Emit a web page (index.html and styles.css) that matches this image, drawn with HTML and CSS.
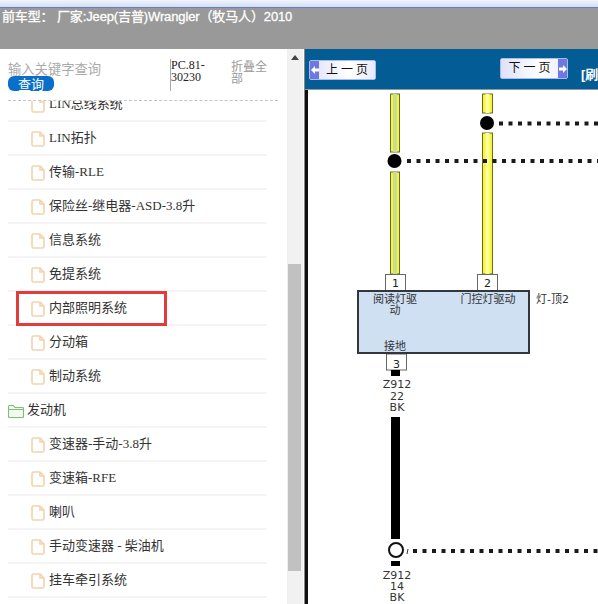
FILE: index.html
```html
<!doctype html>

<html lang="en">
<head>
    <meta charset="utf-8">
    <title>车型电路图</title>
    <link rel="stylesheet" href="styles.css">
</head>

<body>
<div class="topstrip"></div>
<div class="carbar">前车型： 厂家:Jeep(吉普)Wrangler（牧马人）2010</div>
<div class="main">
    <div class="side">
        <div class="search">
            <div class="search-left">
                <div class="search-input">输入关键字查询</div>
                <div class="search-btn">查询</div>
            </div>
            <div class="pc-code">PC.81-30230</div>
            <div class="collapse">折叠全部</div>
        </div>
        <div class="tree">
            <ul class="tree-list">
                <li class="file"><svg class="ico-file" viewBox="0 0 14 16"><path d="M1 2.5a1.5 1.5 0 0 1 1.5-1.5H9l4 4v8.500a1.500 1.500 0 0 1-1.500 1.500h-9A1.500 1.500 0 0 1 1 13.500zM9 1v4h4"/></svg>LIN总线系统</li>
                <li class="file"><svg class="ico-file" viewBox="0 0 14 16"><path d="M1 2.5a1.5 1.5 0 0 1 1.5-1.5H9l4 4v8.500a1.500 1.500 0 0 1-1.500 1.500h-9A1.500 1.500 0 0 1 1 13.500zM9 1v4h4"/></svg>LIN拓扑</li>
                <li class="file"><svg class="ico-file" viewBox="0 0 14 16"><path d="M1 2.5a1.5 1.5 0 0 1 1.5-1.5H9l4 4v8.500a1.500 1.500 0 0 1-1.500 1.500h-9A1.500 1.500 0 0 1 1 13.500zM9 1v4h4"/></svg>传输-RLE</li>
                <li class="file"><svg class="ico-file" viewBox="0 0 14 16"><path d="M1 2.5a1.5 1.5 0 0 1 1.5-1.5H9l4 4v8.500a1.500 1.500 0 0 1-1.500 1.500h-9A1.500 1.500 0 0 1 1 13.500zM9 1v4h4"/></svg>保险丝-继电器-ASD-3.8升</li>
                <li class="file"><svg class="ico-file" viewBox="0 0 14 16"><path d="M1 2.5a1.5 1.5 0 0 1 1.5-1.5H9l4 4v8.500a1.500 1.500 0 0 1-1.500 1.500h-9A1.500 1.500 0 0 1 1 13.500zM9 1v4h4"/></svg>信息系统</li>
                <li class="file"><svg class="ico-file" viewBox="0 0 14 16"><path d="M1 2.5a1.5 1.5 0 0 1 1.5-1.5H9l4 4v8.500a1.500 1.500 0 0 1-1.500 1.500h-9A1.500 1.500 0 0 1 1 13.500zM9 1v4h4"/></svg>免提系统</li>
                <li class="file"><svg class="ico-file" viewBox="0 0 14 16"><path d="M1 2.5a1.5 1.5 0 0 1 1.5-1.5H9l4 4v8.500a1.500 1.500 0 0 1-1.500 1.500h-9A1.500 1.500 0 0 1 1 13.500zM9 1v4h4"/></svg>内部照明系统</li>
                <li class="file"><svg class="ico-file" viewBox="0 0 14 16"><path d="M1 2.5a1.5 1.5 0 0 1 1.5-1.5H9l4 4v8.500a1.500 1.500 0 0 1-1.500 1.500h-9A1.500 1.500 0 0 1 1 13.500zM9 1v4h4"/></svg>分动箱</li>
                <li class="file"><svg class="ico-file" viewBox="0 0 14 16"><path d="M1 2.5a1.5 1.5 0 0 1 1.5-1.5H9l4 4v8.500a1.500 1.500 0 0 1-1.500 1.500h-9A1.500 1.500 0 0 1 1 13.500zM9 1v4h4"/></svg>制动系统</li>
                <li class="folder"><svg class="ico-folder" viewBox="0 0 16 13"><path d="M.5 2V1.500a1 1 0 0 1 1-1h4l1.500 2h7.500a1 1 0 0 1 1 1v8a1 1 0 0 1-1 1h-13a1 1 0 0 1-1-1zM.5 4.500h15"/></svg>发动机</li>
                <li class="file"><svg class="ico-file" viewBox="0 0 14 16"><path d="M1 2.5a1.5 1.5 0 0 1 1.5-1.5H9l4 4v8.500a1.500 1.500 0 0 1-1.500 1.500h-9A1.500 1.500 0 0 1 1 13.500zM9 1v4h4"/></svg>变速器-手动-3.8升</li>
                <li class="file"><svg class="ico-file" viewBox="0 0 14 16"><path d="M1 2.5a1.5 1.5 0 0 1 1.5-1.5H9l4 4v8.500a1.500 1.500 0 0 1-1.500 1.500h-9A1.500 1.500 0 0 1 1 13.500zM9 1v4h4"/></svg>变速箱-RFE</li>
                <li class="file"><svg class="ico-file" viewBox="0 0 14 16"><path d="M1 2.5a1.5 1.5 0 0 1 1.5-1.5H9l4 4v8.500a1.500 1.500 0 0 1-1.500 1.500h-9A1.500 1.500 0 0 1 1 13.500zM9 1v4h4"/></svg>喇叭</li>
                <li class="file"><svg class="ico-file" viewBox="0 0 14 16"><path d="M1 2.5a1.5 1.5 0 0 1 1.5-1.5H9l4 4v8.500a1.500 1.500 0 0 1-1.500 1.500h-9A1.500 1.500 0 0 1 1 13.500zM9 1v4h4"/></svg>手动变速器 - 柴油机</li>
                <li class="file"><svg class="ico-file" viewBox="0 0 14 16"><path d="M1 2.5a1.5 1.5 0 0 1 1.5-1.5H9l4 4v8.500a1.500 1.500 0 0 1-1.500 1.500h-9A1.500 1.500 0 0 1 1 13.500zM9 1v4h4"/></svg>挂车牵引系统</li>
            </ul>
        </div>
        <div class="redbox"></div>
    </div>
    <div class="scrollbar">
        <div class="scroll-up"></div>
        <div class="scroll-thumb"></div>
    </div>
    <div class="viewer">
        <div class="toolbar">
            <div class="pagebtn prev"><span class="cap"><svg viewBox="0 0 10 10"><path d="M0 5l5-5v3h5v4H5v3z"/></svg></span><span class="label">上 一 页</span></div>
            <div class="pagebtn next"><span class="label">下 一 页</span><span class="cap"><svg viewBox="0 0 10 10"><path d="M10 5L5 0v3H0v4h5v3z"/></svg></span></div>
            <div class="refresh">[刷新]</div>
        </div>
        <div class="canvas">
            <svg class="diagram" viewBox="308 90 290 514">
                <g class="wire-yellow">
                    <rect x="390.500" y="94" width="9" height="58"/>
                    <rect x="390.500" y="172" width="9" height="102"/>
                    <rect x="482.500" y="94" width="10" height="19"/>
                    <rect x="482.500" y="133" width="10" height="141"/>
                </g>
                <g class="wire-core">
                    <rect x="393" y="94" width="4" height="58"/>
                    <rect x="393" y="172" width="4" height="102"/>
                </g>
                <g class="wire-pale">
                    <rect x="485.500" y="94" width="4" height="19"/>
                    <rect x="485.500" y="133" width="4" height="141"/>
                </g>
                <circle class="dot" cx="487" cy="123" r="7"/>
                <circle class="dot" cx="394.500" cy="161" r="7"/>
                <path class="dotted" d="M499 123.500H598M407 161H598M413 551H598"/>
                <path class="dotted-tick" d="M408 549l-1 5"/>

                <rect class="pin" x="385.500" y="274.500" width="20" height="16"/>
                <rect class="pin" x="477.500" y="274.500" width="20" height="16"/>
                <rect class="pin" x="386.500" y="354" width="20" height="16"/>
                <text class="pin-no" x="395.500" y="287">1</text>
                <text class="pin-no" x="487.500" y="287">2</text>
                <text class="pin-no" x="396.500" y="368">3</text>

                <rect class="module" x="358" y="291" width="171" height="62"/>
                <text class="lab" x="395" y="303">阅读灯驱</text>
                <text class="lab" x="395" y="314">动</text>
                <text class="lab" x="488" y="303">门控灯驱动</text>
                <text class="lab" x="395" y="350">接地</text>
                <text class="lab lab-left" x="536" y="303">灯-顶2</text>

                <rect class="wire-black" x="391" y="370" width="9" height="6"/>
                <text class="lab" x="397" y="388">Z912</text>
                <text class="lab" x="397" y="400">22</text>
                <text class="lab" x="397" y="411">BK</text>
                <rect class="wire-black" x="391" y="417" width="9" height="122"/>
                <circle class="open" cx="396" cy="550" r="7"/>
                <rect class="wire-black" x="391" y="561" width="9" height="5"/>
                <text class="lab" x="397" y="579">Z912</text>
                <text class="lab" x="397" y="590">14</text>
                <text class="lab" x="397" y="601">BK</text>
            </svg>
        </div>
    </div>
</div>
</body>
</html>
```

FILE: styles.css
```css
html, body {
	margin: 0;
	height: 604px;
	overflow: hidden;
	background: #fff;
	font-family: "Liberation Serif", "Noto Sans CJK SC", serif;
}
.topstrip {
	height: 7px;
	background: linear-gradient(to bottom, #f2f5fc, #d3dcf2);
	border-bottom: 1px solid #5f80c8;
}
.carbar {
	height: 41px;
	box-sizing: border-box;
	padding: 1px 0 0 2px;
	background: #999;
	color: #fff;
	font-family: "Liberation Sans", "Noto Sans CJK SC", sans-serif;
	font-size: 13px;
	letter-spacing: -0.13px;
	-webkit-text-stroke: 0.3px #fff;
	line-height: 16px;
	white-space: nowrap;
	overflow: hidden;
}
.main {
	display: flex;
	height: 555px;
}

/* left panel */
.side {
	position: relative;
	width: 287px;
	flex: none;
	display: flex;
	flex-direction: column;
	overflow: hidden;
}
.search {
	display: flex;
	height: 52px;
	box-sizing: border-box;
	margin: 0 9px 0 8px;
	padding-top: 10px;
	border-bottom: 1px dashed #c4c4c4;
}
.search-left {
	width: 162px;
	flex: none;
	padding-top: 2px;
}
.search-input {
	color: #aaa;
	font-family: "Noto Sans CJK SC", sans-serif;
	font-size: 13.300px;
	height: 15px;
	line-height: 15px;
}
.search-btn {
	width: 46px;
	height: 15px;
	background: #0a6fc8;
	border-radius: 6px;
	color: #fff;
	text-align: center;
	font-family: "Noto Sans CJK SC", sans-serif;
	font-size: 13px;
	line-height: 15px;
}
.pc-code {
	width: 61px;
	flex: none;
	height: 32px;
	box-sizing: border-box;
	border-left: 1px solid #aaa;
	font-size: 12px;
	line-height: 12px;
	color: #222;
	overflow-wrap: anywhere;
}
.collapse {
	width: 37px;
	padding-top: 1px;
	color: #999;
	font-family: "Noto Sans CJK SC", sans-serif;
	font-size: 12px;
	line-height: 12px;
}
.tree {
	flex: 1;
	overflow: hidden;
}
.tree-list {
	list-style: none;
	margin: -13px 20px 0 8px;
	padding: 0;
}
.tree-list li {
	display: flex;
	align-items: center;
	height: 34px;
	box-sizing: border-box;
	padding-bottom: 4px;
	border-bottom: 2px solid #f5f5f5;
	color: #333;
	font-size: 13px;
	white-space: nowrap;
}
.tree-list li.file {
	padding-left: 23px;
}
.ico-file {
	width: 14px;
	height: 16px;
	margin: 6px 4px 0 0;
	fill: #fff;
	stroke: #f2d3ae;
	stroke-width: 1.600;
}
.ico-folder {
	width: 16px;
	height: 13px;
	margin: 6px 3px 0 0;
	fill: #f3faf0;
	stroke: #7cc077;
	stroke-width: 1.100;
}
.redbox {
	position: absolute;
	left: 16px;
	top: 242px;
	width: 145px;
	height: 29px;
	border: 3px solid #e23b3b;
}

/* scrollbar */
.scrollbar {
	position: relative;
	width: 16px;
	flex: none;
	margin-right: 1px;
	background: #f1f1f1;
}
.scroll-up {
	position: absolute;
	left: 4px;
	top: 6px;
	border-left: 4px solid transparent;
	border-right: 4px solid transparent;
	border-bottom: 5px solid #444;
}
.scroll-thumb {
	position: absolute;
	left: 1px;
	top: 215px;
	width: 13px;
	height: 307px;
	background: #c1c1c1;
}

/* right panel */
.viewer {
	flex: 1;
	min-width: 0;
	display: flex;
	flex-direction: column;
	border-left: 1px solid #888;
}
.toolbar {
	position: relative;
	height: 41px;
	flex: none;
	box-sizing: border-box;
	background: #045c95;
	border-bottom: 1px solid #8a9aa8;
	overflow: hidden;
}
.pagebtn {
	position: absolute;
	display: flex;
	height: 18px;
	border: 1px solid #a9bcec;
	border-radius: 2px;
	background: linear-gradient(to right, #dfe1fa, #fff 60%, #e8eafa);
	color: #111;
	font-family: "Liberation Serif", "Noto Sans CJK SC", serif;
	font-size: 12px;
	line-height: 18px;
}
.prev {
	left: 4px;
	top: 11px;
	width: 65px;
}
.next {
	left: 195px;
	top: 9px;
	width: 66px;
	height: 19px;
}
.cap {
	width: 9px;
	flex: none;
	display: flex;
	align-items: center;
	justify-content: center;
	background: #6f78e0;
}
.cap svg {
	width: 8px;
	height: 8px;
	fill: #fff;
}
.label {
	flex: 1;
	text-align: center;
	white-space: nowrap;
}
.refresh {
	position: absolute;
	left: 276px;
	top: 15px;
	color: #fff;
	font-family: "Liberation Sans", "Noto Sans CJK SC", sans-serif;
	font-size: 13px;
	font-weight: bold;
	white-space: nowrap;
}
.canvas {
	flex: 1;
	min-height: 0;
	border-left: 3px solid #111;
	background: #fff;
}
.diagram {
	display: block;
	width: 290px;
	height: 514px;
}
.wire-yellow rect {
	fill: #f6f63c;
	stroke: #6a6a1e;
	stroke-width: 1;
}
.wire-core rect {
	fill: #c6de98;
}
.wire-pale rect {
	fill: #ffff9c;
}
.dot {
	fill: #000;
}
.open {
	fill: #fff;
	stroke: #111;
	stroke-width: 2;
}
.dotted {
	fill: none;
	stroke: #1a1a1a;
	stroke-width: 4;
	stroke-dasharray: 4 5.500;
}
.dotted-tick {
	fill: none;
	stroke: #333;
	stroke-width: 1;
}
.pin {
	fill: #fff;
	stroke: #666;
	stroke-width: 1;
}
.pin-no {
	font-family: "DejaVu Sans", sans-serif;
	font-size: 11px;
	text-anchor: middle;
	fill: #222;
}
.module {
	fill: #cfe0f3;
	stroke: #33373c;
	stroke-width: 2;
}
.lab {
	font-family: "DejaVu Sans", "Noto Sans CJK SC", sans-serif;
	font-size: 11px;
	text-anchor: middle;
	fill: #333;
}
.lab-left {
	text-anchor: start;
}
.wire-black {
	fill: #000;
}
```
